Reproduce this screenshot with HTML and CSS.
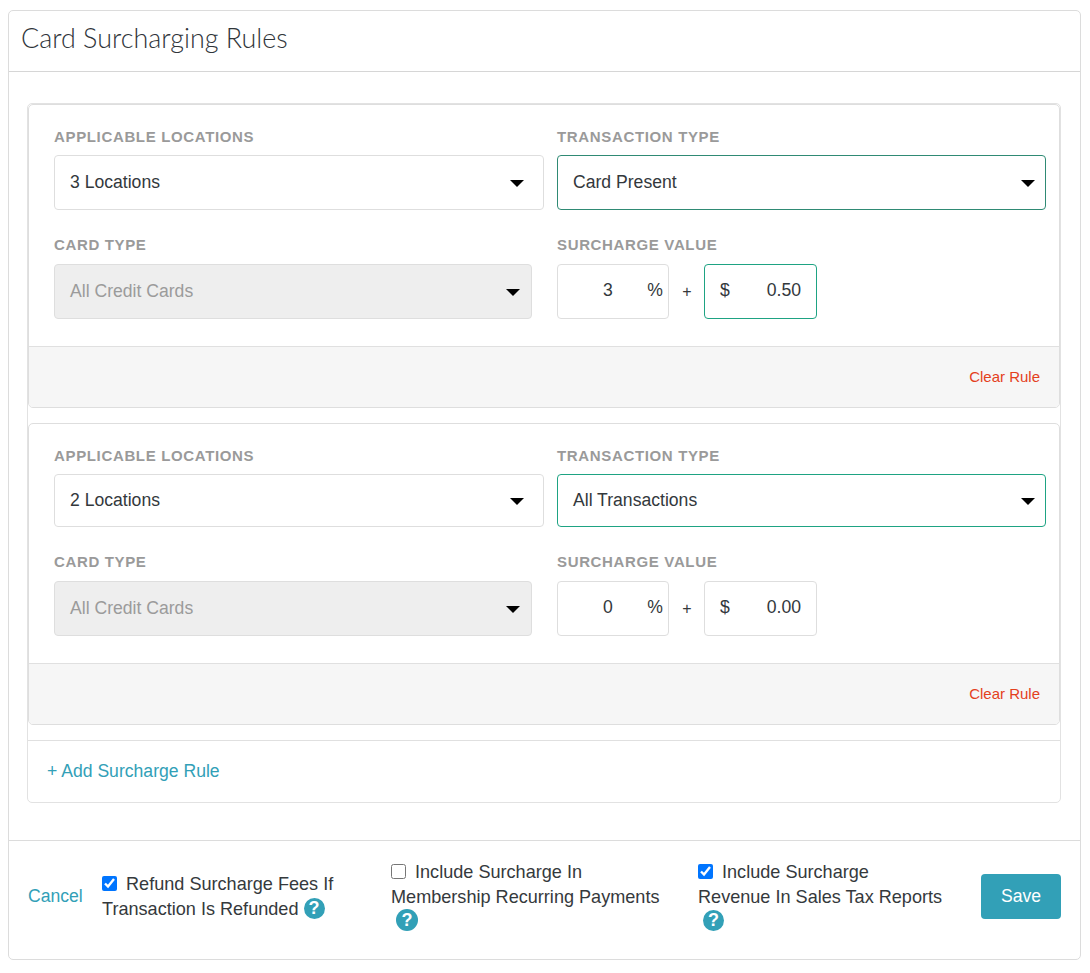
FILE: index.html
```html
<!DOCTYPE html>
<html lang="en">
<head>
<meta charset="utf-8">
<title>Card Surcharging Rules</title>
<link rel="stylesheet" href="styles.css">
</head>
<body>
<main class="card">
  <header class="card-head"><h1>Card Surcharging Rules</h1></header>
  <div class="card-body">
    <div class="rules">
      <section class="rule rule-first">
        <div class="rule-grid">
          <div class="field">
            <div class="label">APPLICABLE LOCATIONS</div>
            <div class="select tall">3 Locations<i class="caret"></i></div>
          </div>
          <div class="field">
            <div class="label">TRANSACTION TYPE</div>
            <div class="select tall focus-dark">Card Present<i class="caret"></i></div>
          </div>
          <div class="field">
            <div class="label">CARD TYPE</div>
            <div class="select tall disabled">All Credit Cards<i class="caret"></i></div>
          </div>
          <div class="field">
            <div class="label">SURCHARGE VALUE</div>
            <div class="values">
              <div class="value pct"><span class="num">3</span><span>%</span></div>
              <span class="plus">+</span>
              <div class="value amt focus-green"><span>$</span><span class="num">0.50</span></div>
            </div>
          </div>
        </div>
        <div class="rule-foot"><a class="clear">Clear Rule</a></div>
      </section>
      <section class="rule rule-second">
        <div class="rule-grid">
          <div class="field">
            <div class="label">APPLICABLE LOCATIONS</div>
            <div class="select">2 Locations<i class="caret"></i></div>
          </div>
          <div class="field">
            <div class="label">TRANSACTION TYPE</div>
            <div class="select focus-green">All Transactions<i class="caret"></i></div>
          </div>
          <div class="field">
            <div class="label">CARD TYPE</div>
            <div class="select tall disabled">All Credit Cards<i class="caret"></i></div>
          </div>
          <div class="field">
            <div class="label">SURCHARGE VALUE</div>
            <div class="values">
              <div class="value pct"><span class="num">0</span><span>%</span></div>
              <span class="plus">+</span>
              <div class="value amt"><span>$</span><span class="num">0.00</span></div>
            </div>
          </div>
        </div>
        <div class="rule-foot"><a class="clear">Clear Rule</a></div>
      </section>
      <div class="add-row"><a class="link">+ Add Surcharge Rule</a></div>
    </div>
  </div>
  <footer class="card-foot">
    <a class="link cancel">Cancel</a>
    <div class="opts">
      <label class="opt opt-1"><input type="checkbox" checked> Refund Surcharge Fees If<br>Transaction Is Refunded <span class="help">?</span></label>
      <label class="opt opt-2"><input type="checkbox"> Include Surcharge In<br>Membership Recurring Payments <span class="help">?</span></label>
      <label class="opt opt-3"><input type="checkbox" checked> Include Surcharge<br>Revenue In Sales Tax Reports <span class="help">?</span></label>
    </div>
    <button class="save" type="button">Save</button>
  </footer>
</main>
</body>
</html>
```

FILE: styles.css
```css
* { box-sizing: border-box; }
html, body { height: 100%; }
body {
  margin: 0;
  padding: 10px 9px 0 8px;
  background: #fff;
  font-family: "Liberation Sans", Arial, sans-serif;
  font-size: 17.6px;
  color: #35393c;
}
.card {
  border: 1px solid #dcdcdc;
  border-radius: 5px;
  height: 950px;
  display: flex;
  flex-direction: column;
}
.card-head {
  height: 61px;
  border-bottom: 1px solid #d6d6d6;
  padding-left: 12px;
  display: flex;
  align-items: center;
}
.card-head h1 {
  margin: 0 0 8px;
  font-family: Lato, sans-serif;
  font-weight: 300;
  font-size: 26.9px;
  color: #30353a;
}
.card-body {
  padding: 31px 19px 37px 18px;
  border-bottom: 1px solid #dcdcdc;
}
.rules {
  border: 1px solid #e2e2e2;
  border-radius: 5px;
  height: 700px;
  display: flex;
  flex-direction: column;
}
.rule {
  border: 1px solid #dedede;
  border-radius: 5px;
  overflow: hidden;
  display: flex;
  flex-direction: column;
}
.rule-first { height: 304px; }
.rule-second { height: 302px; margin-top: 15px; }
.rule-grid {
  display: grid;
  grid-template-columns: 503px 489px;
  align-content: start;
  padding: 23px 0 0 25px;
}
.rule-first .rule-grid { height: 241px; }
.rule-second .rule-grid { height: 239px; }
.field { min-width: 0; }
.field:nth-child(n+3) { margin-top: 26px; }
.label {
  font-size: 15px;
  font-weight: 700;
  line-height: 18px;
  letter-spacing: 0.65px;
  color: #9a9a9a;
  margin-bottom: 10px;
}
.field:nth-child(-n+2) .label { margin-bottom: 9px; }
.select {
  position: relative;
  height: 53px;
  border: 1px solid #dedede;
  border-radius: 4px;
  padding-left: 15px;
  display: flex;
  align-items: center;
  color: #33383c;
  background: #fff;
}
.field:nth-child(1) .select { width: 490px; }
.select.tall { height: 55px; }
.select.disabled {
  width: 478px;
  background: #eeeeee;
  color: #9b9b9b;
}
.focus-dark { border-color: #2f8a74; }
.focus-green { border-color: #1ea383; }
.caret {
  position: absolute;
  right: 19px;
  top: 50%;
  margin-top: -3px;
  width: 0;
  height: 0;
  border-left: 7.5px solid transparent;
  border-right: 7.5px solid transparent;
  border-top: 7px solid #000;
}
.field:nth-child(2) .caret { right: 10px; }
.field:nth-child(3) .caret { right: 11px; }
.values { display: flex; align-items: center; }
.value {
  height: 55px;
  border: 1px solid #dedede;
  border-radius: 4px;
  padding-bottom: 2px;
  display: flex;
  align-items: center;
  justify-content: space-between;
  color: #33383c;
}
.value.focus-green { border-color: #1ea383; }
.pct { width: 112px; padding-right: 5px; }
.pct .num { margin-left: 45px; }
.amt { width: 113px; padding-left: 15px; padding-right: 15px; }
.plus { width: 35px; padding-left: 1px; text-align: center; font-size: 16px; }
.rule-foot {
  flex: 1;
  background: #f6f6f6;
  border-top: 1px solid #e0e0e0;
  display: flex;
  align-items: center;
  justify-content: flex-end;
  padding: 0 19px 2px 0;
}
.clear { font-size: 15px; color: #e4401c; }
.add-row {
  margin-top: 15px;
  flex: 1;
  border-top: 1px solid #e0e0e0;
  display: flex;
  align-items: center;
  padding-left: 19px;
}
.link { color: #32a0b7; }
.card-foot {
  flex: 1;
  display: flex;
  align-items: center;
  padding: 0 19px 8px 19px;
}
.cancel { width: 74px; }
.opts { display: flex; align-items: center; flex: 1; font-size: 18.1px; margin-top: 2px; }
.opt { display: block; line-height: 24.6px; }
.opt-1 { width: 289px; }
.opt-2 { width: 307px; padding-right: 20px; }
.opt-3 { width: 283px; padding-right: 20px; }
.opt input {
  width: 15px;
  height: 15px;
  margin: 0 4px 0 0;
  vertical-align: -1px;
}
.help {
  display: inline-block;
  width: 21px;
  height: 21px;
  margin: -6px 0 0 0;
  border-radius: 50%;
  background: #32a0b7;
  color: #fff;
  font-weight: 700;
  font-size: 18px;
  line-height: 21px;
  text-align: center;
  vertical-align: 1px;
}
.opt-2 .help, .opt-3 .help { margin-left: 5px; }
.opt-2 .help { width: 22px; height: 22px; line-height: 22px; }
.save {
  width: 80px;
  height: 45px;
  border: 0;
  border-radius: 4px;
  background: #32a0b7;
  color: #fff;
  font: inherit;
}
```
